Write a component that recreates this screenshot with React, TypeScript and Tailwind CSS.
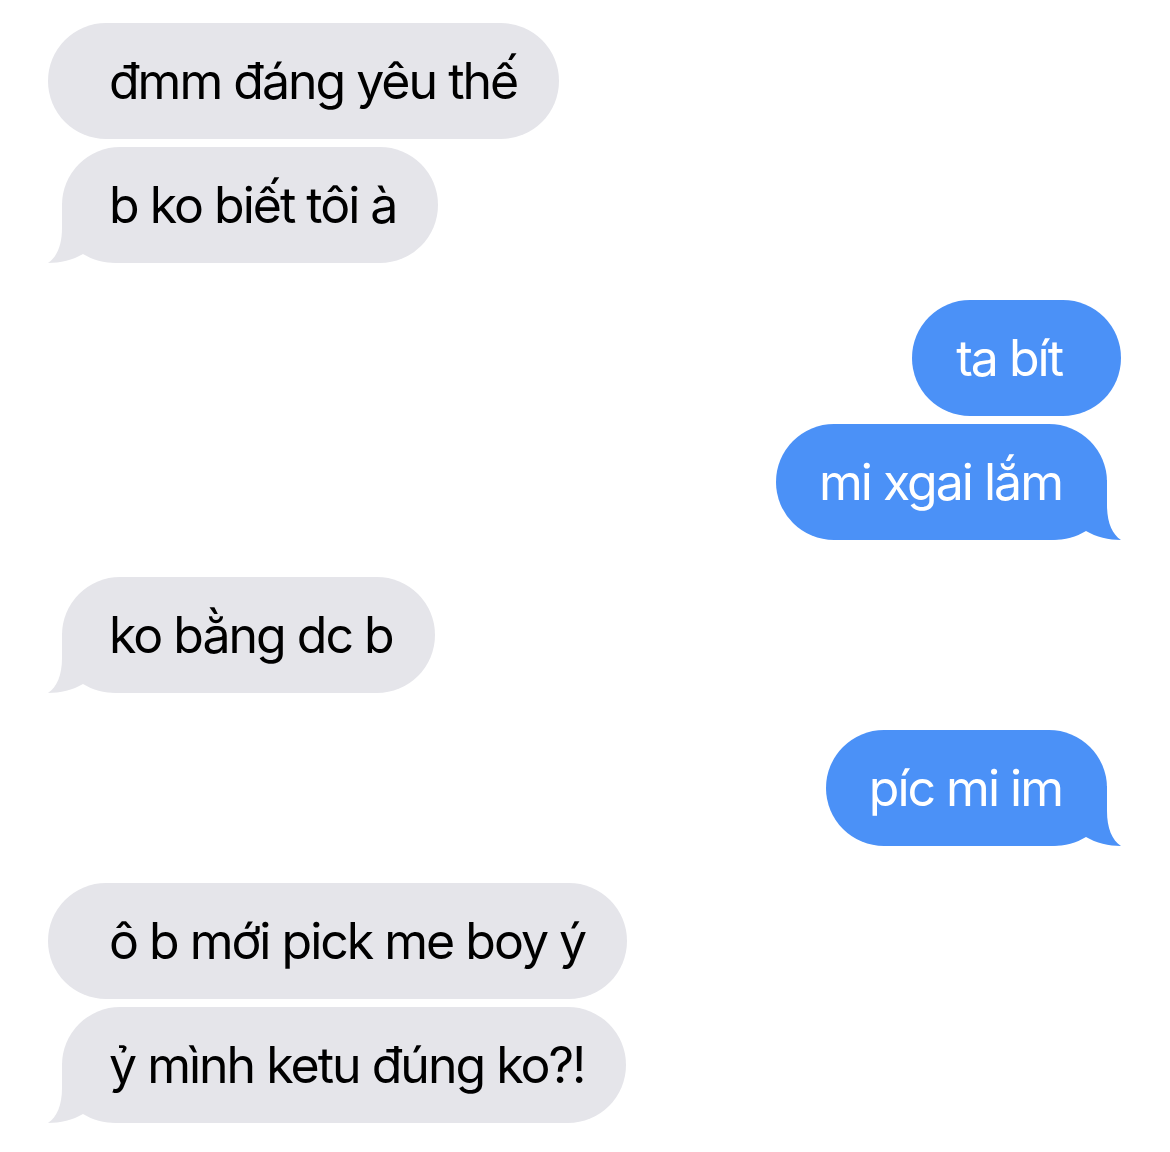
import React from "react";

type Msg = { text: string; me: boolean; tail: boolean; gap: "sm" | "lg" };

const MESSAGES: Msg[] = [
  { text: "đmm đáng yêu thế", me: false, tail: false, gap: "sm" },
  { text: "b ko biết tôi à", me: false, tail: true, gap: "sm" },
  { text: "ta bít", me: true, tail: false, gap: "lg" },
  { text: "mi xgai lắm", me: true, tail: true, gap: "sm" },
  { text: "ko bằng dc b", me: false, tail: true, gap: "lg" },
  { text: "píc mi im", me: true, tail: true, gap: "lg" },
  { text: "ô b mới pick me boy ý", me: false, tail: false, gap: "lg" },
  { text: "ỷ mình ketu đúng ko?!", me: false, tail: true, gap: "sm" },
];

function Tail({ me }: { me: boolean }) {
  return (
    <svg
      width="80"
      height="60"
      viewBox="0 0 80 60"
      className={
        me
          ? "absolute bottom-0 -right-[14px] scale-x-[-1]"
          : "absolute bottom-0 -left-[14px]"
      }
    >
      <path
        d="M14,0 L14,25 C14,42 9,54 0,60 C12,60 25,57 35,51 C45,57 55,60 70,60 L80,60 L80,0 Z"
        fill={me ? "#4b91f7" : "#e5e5ea"}
      />
    </svg>
  );
}

function Bubble({ msg }: { msg: Msg }) {
  const color = msg.me ? "bg-[#4b91f7] text-white" : "bg-[#e5e5ea] text-black";
  let pad = "";
  if (msg.me) {
    pad = msg.tail ? "pl-[43px] pr-[45px] mr-[14px]" : "pl-[44px] pr-[59px]";
  } else {
    pad = msg.tail ? "pl-[47px] pr-[42px] ml-[14px]" : "pl-[61px] pr-[42px]";
  }
  return (
    <div
      className={`relative flex h-[116px] items-center rounded-[58px] ${color} ${pad}`}
    >
      {msg.tail && <Tail me={msg.me} />}
      <span className="relative whitespace-nowrap text-[50px] leading-none tracking-[-2px]">
        {msg.text}
      </span>
    </div>
  );
}

export default function App() {
  return (
    <div
      className="min-h-[1152px] w-[1170px] bg-white px-[48px] pt-[23px]"
      style={{ fontFamily: "Inter, 'Noto Sans', sans-serif" }}
    >
      <div className="flex flex-col">
        {MESSAGES.map((m, i) => (
          <div
            key={i}
            className={`flex ${m.me ? "justify-end pr-[1px]" : "justify-start"} ${
              i === 0 ? "" : m.gap === "lg" ? "mt-[37px]" : "mt-[8px]"
            }`}
          >
            <Bubble msg={m} />
          </div>
        ))}
      </div>
    </div>
  );
}
